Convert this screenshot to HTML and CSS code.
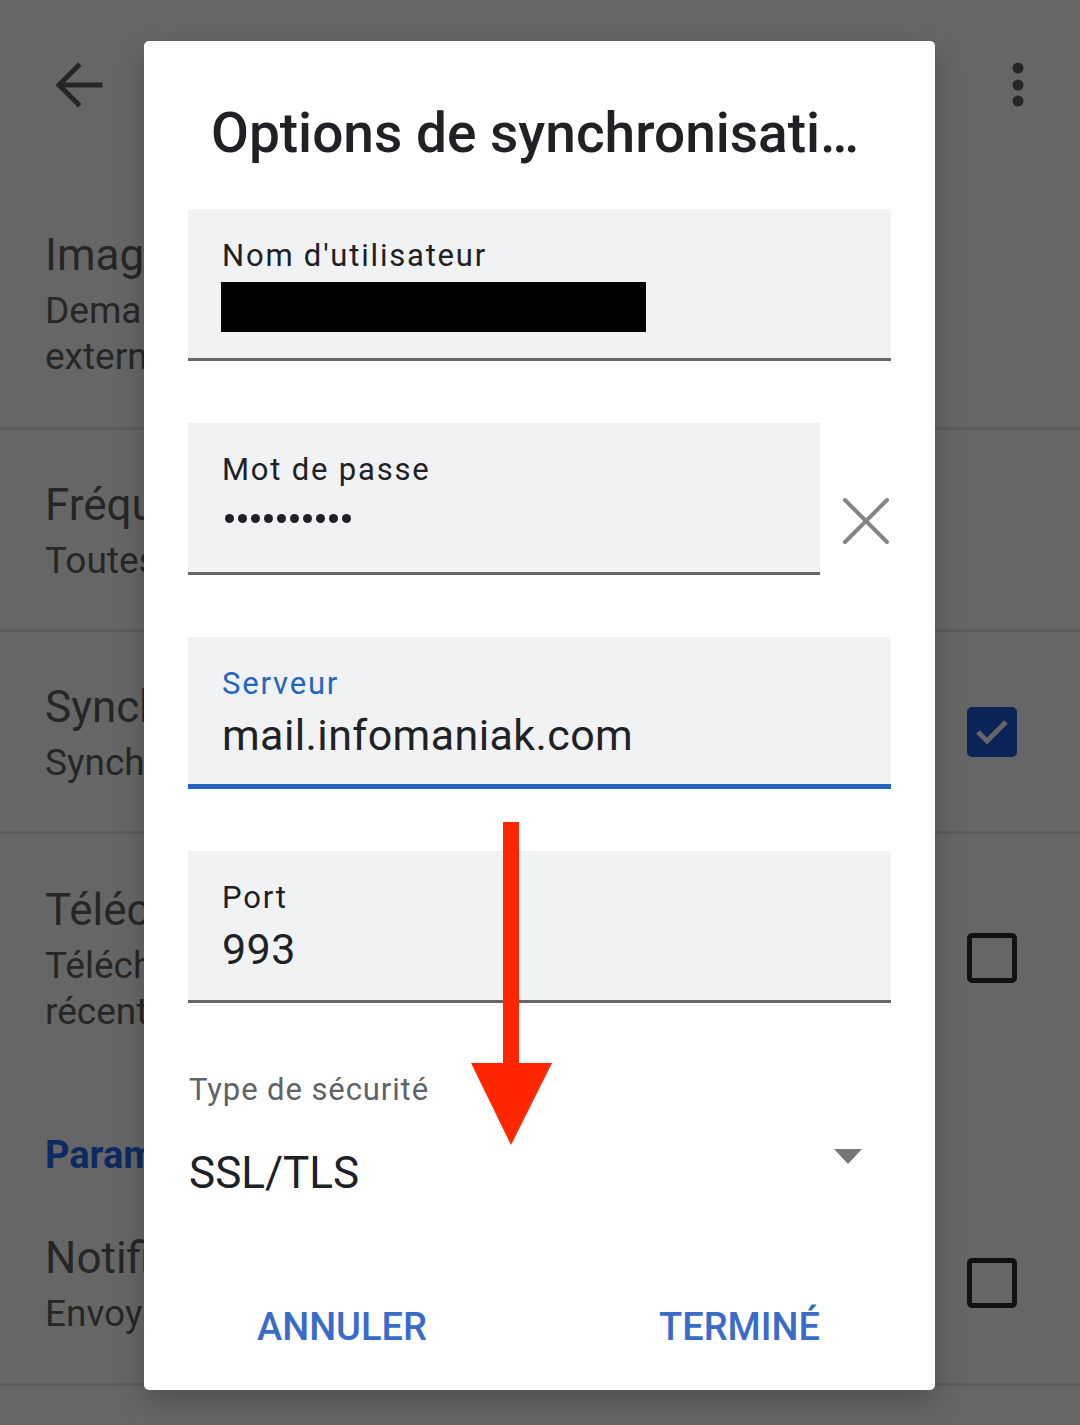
FILE: index.html
```html
<!DOCTYPE html>
<html lang="fr">
<head>
<meta charset="utf-8">
<title>Options de synchronisation</title>
<link rel="stylesheet" href="styles.css">
</head>
<body>
<div class="screen">
  <header class="appbar">
    <svg class="back" width="60" height="60" viewBox="0 0 60 60"><path d="M52 30 H12 M30 11 L11 30 L30 49" fill="none" stroke="#262626" stroke-width="5" stroke-linecap="square"/></svg>
    <svg class="more" width="20" height="50" viewBox="0 0 20 50"><circle cx="10" cy="8" r="5.5" fill="#262626"/><circle cx="10" cy="25" r="5.5" fill="#262626"/><circle cx="10" cy="41" r="5.5" fill="#262626"/></svg>
  </header>
  <div class="item item-images">
    <div class="item-text">
      <div class="item-title">Images externes</div>
      <div class="item-desc">Demander avant d'afficher les images<br>externes</div>
    </div>
  </div>
  <div class="item item-freq">
    <div class="item-text">
      <div class="item-title">Fréquence de synchronisation</div>
      <div class="item-desc">Toutes les 15 minutes</div>
    </div>
  </div>
  <div class="item item-sync">
    <div class="item-text">
      <div class="item-title">Synchroniser les e-mails</div>
      <div class="item-desc">Synchroniser les e-mails de ce compte</div>
    </div>
    <span class="check checked"><svg width="50" height="50" viewBox="0 0 50 50"><path d="M11 25 L20 34 L39 15" fill="none" stroke="#666" stroke-width="5"/></svg></span>
  </div>
  <div class="item item-dl">
    <div class="item-text">
      <div class="item-title">Télécharger les pièces jointes</div>
      <div class="item-desc">Télécharger automatiquement les pièces<br>récentes</div>
    </div>
    <span class="check"></span>
  </div>
  <div class="section"><span class="section-text">Paramètres de notification</span></div>
  <div class="item item-notif">
    <div class="item-text">
      <div class="item-title">Notifications</div>
      <div class="item-desc">Envoyer une notification</div>
    </div>
    <span class="check"></span>
  </div>

  <div class="dialog">
    <h1 class="dialog-title">Options de synchronisati…</h1>
    <div class="field">
      <div class="field-label">Nom d'utilisateur</div>
      <div class="redacted"></div>
    </div>
    <div class="field-row">
      <div class="field field-narrow">
        <div class="field-label">Mot de passe</div>
        <div class="dots"><i></i><i></i><i></i><i></i><i></i><i></i><i></i><i></i><i></i><i></i></div>
      </div>
      <svg class="clear" width="48" height="48" viewBox="0 0 48 48"><path d="M3 3 L45 45 M45 3 L3 45" stroke="#858585" stroke-width="4" stroke-linecap="round"/></svg>
    </div>
    <div class="field field-focus">
      <div class="field-label label-focus">Serveur</div>
      <div class="field-value">mail.infomaniak.com</div>
    </div>
    <div class="field">
      <div class="field-label">Port</div>
      <div class="field-value">993</div>
    </div>
    <div class="select">
      <div class="select-label">Type de sécurité</div>
      <div class="select-row">
        <span class="select-value">SSL/TLS</span>
        <span class="caret"></span>
      </div>
    </div>
    <div class="actions">
      <span class="btn">ANNULER</span>
      <span class="btn">TERMINÉ</span>
    </div>
  </div>

  <svg class="arrow" width="82" height="326" viewBox="0 0 82 326"><rect x="32" y="0" width="16" height="245" fill="#ff2600"/><path d="M0 241 H81 L40 323 Z" fill="#ff2600"/></svg>
</div>
</body>
</html>
```

FILE: styles.css
```css
* { box-sizing: border-box; margin: 0; padding: 0; }
html, body { width: 1080px; height: 1425px; overflow: hidden; }
body { background: #666; font-family: Roboto, "Noto Sans", sans-serif; color: #262626; }

.screen { position: relative; width: 1080px; height: 1425px; background: #666; overflow: hidden; }

.appbar { height: 200px; display: flex; justify-content: space-between; align-items: flex-start; padding: 55px 52px 0 48px; }
.more { margin-top: 5px; }

.item { display: flex; align-items: flex-start; justify-content: space-between; padding: 0 63px 0 45px; border-bottom: 3px solid #5c5c5c; }
.item-text { width: 99px; overflow: hidden; }
.item-title { font-size: 44px; line-height: 52px; color: #262626; white-space: nowrap; }
.item-desc { font-size: 37px; line-height: 46px; color: #262626; white-space: nowrap; margin-top: 7px; }
.item-images { height: 230px; padding-top: 29px; }
.item-freq { height: 202px; padding-top: 49px; }
.item-sync { height: 202px; padding-top: 49px; }
.item-sync .check { margin-top: 26px; }
.item-dl { height: 291px; border-bottom: none; padding-top: 50px; }
.item-dl .check { margin-top: 49px; }
.section { height: 60px; padding-left: 45px; }
.section-text { display: block; width: 99px; overflow: hidden; white-space: nowrap; font-size: 38px; font-weight: 700; color: #0e2a63; line-height: 60px; }
.item-notif { height: 201px; padding-top: 47px; }
.item-notif .check { margin-top: 26px; }

.check { width: 50px; height: 50px; border: 5px solid #111; border-radius: 5px; display: block; flex: none; }
.check.checked { background: #0b2558; border: none; }
.check svg { display: block; }

.dialog { position: absolute; left: 144px; top: 41px; width: 791px; height: 1349px; background: #fff; border-radius: 5px; box-shadow: 0 12px 30px rgba(0,0,0,0.22); padding: 0 44px; display: flex; flex-direction: column; }
.dialog-title { font-size: 55px; font-weight: 500; color: #202124; padding: 62px 0 0 23px; line-height: 60px; height: 168px; white-space: nowrap; }

.field { background: #f1f2f4; height: 152px; border-bottom: 3px solid #666769; padding: 29px 0 0 34px; margin-bottom: 62px; flex: none; }
.field-row { display: flex; align-items: flex-start; }
.field-narrow { width: 632px; }
.clear { margin: 74px 0 0 22px; flex: none; }
.field-label { font-size: 31px; line-height: 36px; letter-spacing: 1.8px; color: #202124; }
.label-focus { color: #2465c0; }
.field-focus { border-bottom: 5px solid #2465c0; }
.field-value { font-size: 43px; line-height: 55px; color: #202124; letter-spacing: 0.4px; margin-top: 6px; }
.redacted { width: 425px; height: 50px; background: #000; margin: 8px 0 0 -1px; }
.dots { display: flex; gap: 4px; margin: 26px 0 0 3px; }
.dots i { width: 9px; height: 9px; border-radius: 50%; background: #202124; display: block; }

.select { padding: 1px 0 0 1px; }
.select-label { font-size: 31px; line-height: 40px; color: #5f6368; letter-spacing: 0.9px; margin-top: 4px; }
.select-row { display: flex; justify-content: space-between; align-items: center; height: 100px; padding-right: 29px; }
.select-value { font-size: 44px; color: #202124; margin-top: 26px; }
.caret { width: 0; height: 0; border-left: 14px solid transparent; border-right: 14px solid transparent; border-top: 15px solid #777; margin-top: -8px; }

.actions { display: flex; justify-content: space-between; padding: 95px 71px 0 69px; }
.btn { font-size: 38px; font-weight: 500; color: #3a6bc9; line-height: 44px; }

.arrow { position: absolute; left: 471px; top: 822px; }
```
